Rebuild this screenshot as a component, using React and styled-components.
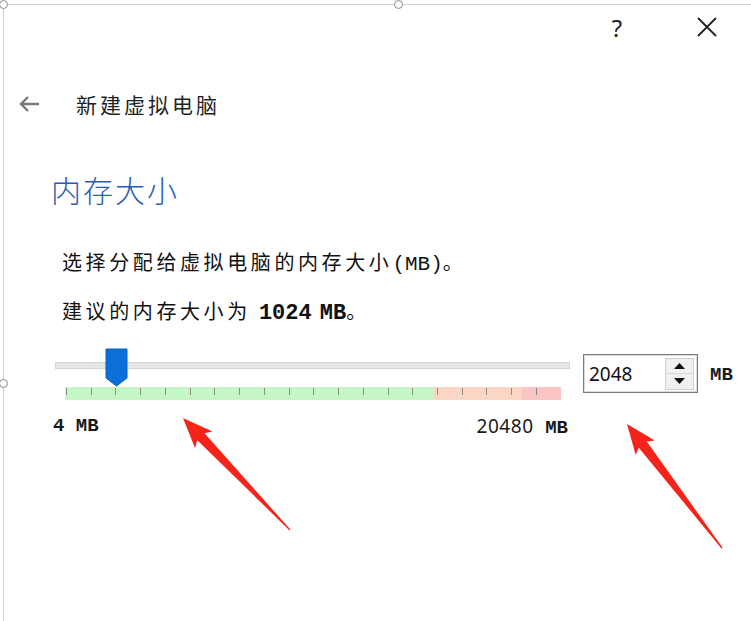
import React from "react";
import styled, { createGlobalStyle } from "styled-components";

const Global = createGlobalStyle`
  html, body { margin: 0; padding: 0; background: #fff; }
  body { font-family: "Noto Sans CJK SC", "Noto Sans", sans-serif; color: #1a1a1a; }
`;

const Page = styled.div`
  position: relative;
  width: 751px;
  height: 621px;
  overflow: hidden;
  background: #fff;
`;

const Frame = styled.div`
  margin: 4px 0 0 3px;
  height: 617px;
  border-top: 1px solid #cfcfcf;
  border-left: 1px solid #cfcfcf;
  box-sizing: border-box;
  display: flex;
  flex-direction: column;
`;

const Handle = styled.span`
  position: absolute;
  left: ${(p) => p.$x - 4}px;
  top: ${(p) => p.$y - 4}px;
  width: 7px;
  height: 7px;
  border: 1px solid #8c8c8c;
  border-radius: 50%;
  background: #fff;
`;

const TitleBar = styled.div`
  height: 44px;
  display: flex;
  justify-content: flex-end;
  align-items: center;
  gap: 50px;
  padding-right: 24px;
`;

const TitleButton = styled.div`
  width: 40px;
  height: 40px;
  display: flex;
  align-items: center;
  justify-content: center;
  font-family: "Noto Sans", sans-serif;
  font-size: 24px;
  color: #222;
`;

const Header = styled.div`
  margin-top: 37px;
  height: 36px;
  display: flex;
  align-items: center;
  padding-left: 14px;
  gap: 36px;
`;

const HeaderTitle = styled.div`
  font-size: 21px;
  letter-spacing: 3px;
  color: #1f1f1f;
`;

const Heading = styled.h1`
  margin: 47px 0 0 47px;
  font-size: 30px;
  line-height: 40px;
  font-weight: 300;
  color: #2a5cb5;
  letter-spacing: 2px;
`;

const Para = styled.p`
  margin: ${(p) => p.$mt}px 0 0 58px;
  font-size: 20px;
  line-height: 30px;
  letter-spacing: 3.6px;
  color: #111;
`;

const Strong = styled.b`
  font-family: "Liberation Mono", monospace;
  font-size: 22px;
  font-weight: 700;
  letter-spacing: 0;
`;

const Latin = styled.span`
  font-family: "Liberation Mono", monospace;
  font-size: ${(p) => (p.$big ? 22 : 21)}px;
  letter-spacing: 0;
  font-weight: ${(p) => (p.$bold ? 700 : 400)};
`;

const SliderRow = styled.div`
  margin-top: 19px;
  display: flex;
  align-items: flex-start;
`;

const SliderCol = styled.div`
  margin-left: 51px;
  width: 515px;
  display: flex;
  flex-direction: column;
`;

const TrackArea = styled.div`
  position: relative;
  height: 39px;
  padding-top: 14px;
  box-sizing: border-box;
`;

const Track = styled.div`
  height: 7px;
  background: #e7e7e7;
  border: 1px solid #d6d6d6;
  box-sizing: border-box;
`;

const Thumb = styled.svg`
  position: absolute;
  top: 0;
`;

const TickBar = styled.div`
  margin-left: 10px;
  width: 496px;
  height: 13px;
  background: linear-gradient(
    to right,
    #c5f6c5 0,
    #c5f6c5 369px,
    #fcd6c4 369px,
    #fcd6c4 457px,
    #fcc5c5 457px,
    #fcc5c5 100%
  );
  display: flex;
`;

const Ticks = styled.div`
  width: 471px;
  margin-left: 1px;
  display: flex;
  justify-content: space-between;
  align-items: flex-start;
`;

const Tick = styled.span`
  width: 1px;
  height: 7px;
  margin-top: 1px;
  background: #8a8a8a;
`;

const Labels = styled.div`
  margin-top: 15px;
  margin-left: -2px;
  width: 515px;
  display: flex;
  justify-content: space-between;
  font-family: "Liberation Mono", monospace;
  font-size: 19px;
  line-height: 22px;
  color: #1a1a1a;
`;

const Small = styled.span`
  font-family: ${(p) => (p.$sans ? '"Noto Sans", sans-serif' : '"Liberation Mono", monospace')};
  font-weight: ${(p) => (p.$bold ? 700 : 400)};
  letter-spacing: ${(p) => (p.$sans ? "0.6px" : "0")};
  white-space: pre;
`;

const Spin = styled.div`
  margin: 6px 0 0 13px;
  width: 115px;
  height: 39px;
  box-sizing: border-box;
  border: 1px solid #7b7b7b;
  box-shadow: inset 0 0 0 1px #d9d9d9;
  display: flex;
  align-items: center;
  padding: 2px 3px 2px 5px;
`;

const SpinValue = styled.div`
  flex: 1;
  font-family: "Noto Sans", sans-serif;
  font-size: 19px;
  color: #111;
`;

const SpinButtons = styled.div`
  width: 29px;
  height: 32px;
  display: flex;
  flex-direction: column;
  border: 1px solid #cfcfcf;
  box-sizing: border-box;
`;

const SpinBtn = styled.div`
  flex: 1;
  display: flex;
  align-items: center;
  justify-content: center;
  background: #f0f0f0;
  border-top: ${(p) => (p.$bottom ? "1px solid #d6d6d6" : "none")};
`;

const Unit = styled.div`
  margin: 15px 0 0 12px;
  font-family: "Liberation Mono", monospace;
  font-weight: 700;
  font-size: 19px;
  line-height: 24px;
  color: #1a1a1a;
`;

const Overlay = styled.svg`
  position: absolute;
  left: 0;
  top: 0;
  pointer-events: none;
`;

function arrowPoints(x1, y1, x2, y2) {
  const dx = x2 - x1;
  const dy = y2 - y1;
  const L = Math.hypot(dx, dy);
  const ux = dx / L;
  const uy = dy / L;
  const px = -uy;
  const py = ux;
  const P = (a, b) => [x1 + ux * a + px * b, y1 + uy * a + py * b];
  return [
    P(0, 0.6),
    P(L - 26, 5),
    P(L - 30, 12),
    P(L, 0),
    P(L - 30, -12),
    P(L - 26, -5),
    P(0, -0.6),
  ]
    .map((p) => p.map((v) => v.toFixed(1)).join(","))
    .join(" ");
}

export default function App() {
  const ticks = Array.from({ length: 20 });
  return (
    <Page>
      <Global />
      <Frame>
        <TitleBar>
          <TitleButton>?</TitleButton>
          <TitleButton>
            <svg width="20" height="20" viewBox="0 0 20 20">
              <path d="M1 1 L19 19 M19 1 L1 19" stroke="#222" strokeWidth="1.8" />
            </svg>
          </TitleButton>
        </TitleBar>
        <Header>
          <svg width="22" height="18" viewBox="0 0 22 18">
            <path
              d="M21 9 H3 M10 2 L3 9 L10 16"
              stroke="#7a7a7a"
              strokeWidth="2.4"
              fill="none"
            />
          </svg>
          <HeaderTitle>新建虚拟电脑</HeaderTitle>
        </Header>
        <Heading>内存大小</Heading>
        <Para $mt={38}>
          选择分配给虚拟电脑的内存大小<Latin>(MB)</Latin>。
        </Para>
        <Para $mt={16}>
          建议的内存大小为 <Strong>1024</Strong> <Latin $bold $big>MB</Latin>。
        </Para>
        <SliderRow>
          <SliderCol>
            <TrackArea>
              <Track />
              <Thumb width="23" height="39" viewBox="0 0 23 39" style={{ left: 50 }}>
                <path d="M1 1 H22 V30 L11.5 38 L1 30 Z" fill="#0a6fd6" stroke="#0a62c0" strokeWidth="1" />
              </Thumb>
            </TrackArea>
            <TickBar>
              <Ticks>
                {ticks.map((_, i) => (
                  <Tick key={i} />
                ))}
              </Ticks>
            </TickBar>
            <Labels>
              <Small $bold>4 MB</Small>
              <span>
                <Small $sans>20480</Small>
                <Small $bold>{" MB"}</Small>
              </span>
            </Labels>
          </SliderCol>
          <Spin>
            <SpinValue>2048</SpinValue>
            <SpinButtons>
              <SpinBtn>
                <svg width="11" height="6" viewBox="0 0 11 6">
                  <path d="M0 6 L5.5 0 L11 6 Z" fill="#111" />
                </svg>
              </SpinBtn>
              <SpinBtn $bottom>
                <svg width="11" height="6" viewBox="0 0 11 6">
                  <path d="M0 0 L5.5 6 L11 0 Z" fill="#111" />
                </svg>
              </SpinBtn>
            </SpinButtons>
          </Spin>
          <Unit>MB</Unit>
        </SliderRow>
      </Frame>
      <Handle $x={3} $y={4} />
      <Handle $x={398} $y={4} />
      <Handle $x={3} $y={383} />
      <Overlay width="751" height="621" viewBox="0 0 751 621">
        <polygon points={arrowPoints(290, 530, 183, 418)} fill="#f5241a" />
        <polygon points={arrowPoints(722, 548, 627, 424)} fill="#f5241a" />
      </Overlay>
    </Page>
  );
}
